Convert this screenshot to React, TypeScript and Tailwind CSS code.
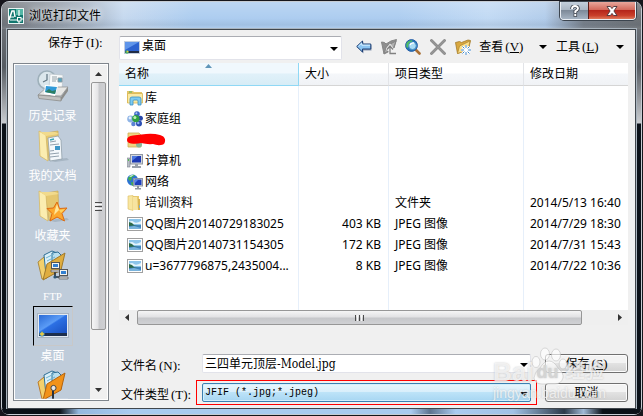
import type { ReactNode } from "react";

const uiFont = "font-['Noto_Sans','Noto_Sans_CJK_SC',sans-serif]";
const monoFont = "font-['Liberation_Mono','Noto_Sans_CJK_SC',monospace]";
const serifFont = "font-['Liberation_Serif','Noto_Sans_CJK_SC',serif]";

function Caret({ className = "" }: { className?: string }) {
  return (
    <svg className={className} width="8" height="4" viewBox="0 0 8 4" aria-hidden="true">
      <path d="M0 0h8L4 4z" fill="#000" />
    </svg>
  );
}

function Key({ children }: { children: ReactNode }) {
  return <span className={`${serifFont} pl-[2px] text-[13px]`}>{children}</span>;
}

/* ---------- small icons (16px) ---------- */

function DesktopSmall() {
  return (
    <svg width="16" height="14" viewBox="0 0 16 14" aria-hidden="true">
      <rect width="16" height="13" fill="#c3cede" />
      <rect x="1" y="1" width="14" height="10" fill="#2c62cf" />
      <path d="M1 1h14L1 9z" fill="#5f95ea" />
      <rect x="1" y="10" width="14" height="2" fill="#1f2c45" />
      <circle cx="3" cy="11" r="1.8" fill="#4fb36a" />
      <circle cx="3.6" cy="10.6" r=".8" fill="#f0c040" />
    </svg>
  );
}

function LibraryIcon() {
  return (
    <svg width="16" height="16" viewBox="0 0 16 16" aria-hidden="true">
      <path d="M0 1h6l1 1h8v11H0z" fill="#e3c468" />
      <path d="M.5 3.500h15v9.500H.5z" fill="#fae9a4" stroke="#d8b550" strokeWidth=".8" />
      <rect x="2" y="1.500" width="3" height="1" fill="#58b45c" />
      <path d="M3 15V9q0-2 2-2h7q2 0 2 2v6h-3v-4q0-1-1-1H7q-1 0-1 1v4z" fill="#7dcbf0" stroke="#3a8fc4" strokeWidth=".8" />
    </svg>
  );
}

function HomegroupIcon() {
  return (
    <svg width="16" height="16" viewBox="0 0 16 16" aria-hidden="true">
      <circle cx="3.6" cy="8" r="3.4" fill="#8fb4e6" />
      <circle cx="3" cy="7" r="1.4" fill="#e4f0fc" />
      <circle cx="10" cy="3" r="2.8" fill="#3a63c4" />
      <circle cx="9.400" cy="2.300" r="1" fill="#a9c4f2" />
      <circle cx="13.4" cy="7.2" r="2.5" fill="#2746a8" />
      <circle cx="12" cy="12.6" r="3" fill="#2d50b4" />
      <circle cx="11.300" cy="12" r="1.200" fill="#8fb0ee" />
      <circle cx="6.4" cy="13" r="2.2" fill="#5b83d4" />
      <circle cx="8.8" cy="7.6" r="3.7" fill="#2fa043" />
      <circle cx="7.9" cy="6.4" r="1.5" fill="#bdf0b4" />
    </svg>
  );
}

function UserFolderIcon() {
  return (
    <svg className="overflow-visible" width="16" height="16" viewBox="0 0 16 16" aria-hidden="true">
      <path d="M1 1h11l2 2v12H1z" fill="#f0d583" stroke="#cfae55" strokeWidth=".8" />
      <circle cx="12" cy="12.5" r="3" fill="#86b99c" />
      <path d="M0 8q0-4 6-4.600 6-.4 13-1.400 8-.6 14 1 4 1 5 4.200 1 5-4 5.800-4 .6-8-1-6 .5-12-1-4 1-10 .4-4-.4-4-3.400z" fill="#f00" />
    </svg>
  );
}

function ComputerIcon() {
  return (
    <svg width="16" height="16" viewBox="0 0 16 16" aria-hidden="true">
      <path d="M0 5h3v9H0z" fill="#b9bec6" stroke="#7c8490" strokeWidth=".6" />
      <rect x="1" y="6" width="1" height="2" fill="#4fc04f" />
      <rect x="3.500" y="1.500" width="12" height="9.500" fill="#d4d8de" stroke="#8f97a2" />
      <rect x="5" y="3" width="9" height="6.500" fill="#1c39b4" />
      <path d="M5 3h6L5 8z" fill="#4b78e0" />
      <path d="M8 11h3v2h3v2H5v-2h3z" fill="#9aa1ab" />
    </svg>
  );
}

function NetworkIcon() {
  return (
    <svg width="16" height="16" viewBox="0 0 16 16" aria-hidden="true">
      <circle cx="5.500" cy="6" r="5.500" fill="#2c73d2" />
      <path d="M1 4q3-4 7-3-1 2-3 2 0 3-2 4-2-1-2-3zM4 8l4 1-2 3q-2-1-2-4z" fill="#43b04b" />
      <path d="M2 2.500q2-2 5-1.800L4 3z" fill="#c9ecd9" />
      <rect x="6.500" y="4.500" width="9" height="7.500" fill="#d6dbe2" stroke="#8c95a1" />
      <rect x="7.500" y="5.500" width="7" height="5.500" fill="#1d3fbd" />
      <path d="M7.500 5.500h4l-4 4z" fill="#5583e8" />
      <path d="M10 12h2v2h2v1.500H8V14h2z" fill="#8d95a0" />
    </svg>
  );
}

function FolderIcon() {
  return (
    <svg width="16" height="16" viewBox="0 0 16 16" aria-hidden="true">
      <path d="M6 1h6v3l1 1v10H6z" fill="#e7c96e" />
      <path d="M1 1l5-.5v15L1 14z" fill="#f8e6a0" stroke="#dbbd62" strokeWidth=".6" />
      <path d="M6 2h4l1 13H6z" fill="#f7e4a0" />
      <path d="M11 4h2v11h-2z" fill="#d9b452" />
      <rect x="12" y="10" width="1" height="3" fill="#7fb0d8" />
    </svg>
  );
}

function ImageIcon() {
  return (
    <svg width="16" height="14" viewBox="0 0 16 14" aria-hidden="true">
      <rect x=".5" y=".5" width="15" height="13" fill="#fff" stroke="#a0a0a0" />
      <rect x="2" y="2" width="12" height="10" fill="#8cc4ea" />
      <path d="M2 5q3-2 5 0t7-1v3H2z" fill="#e3f3fc" />
      <path d="M2 5l3 1 2 2 7 1v1H2z" fill="#2e6b4a" />
      <path d="M2 9l12-1v4H2z" fill="#3f83bd" />
      <path d="M2 10l5-1 7 2v1H2z" fill="#79b3dc" />
    </svg>
  );
}

/* ---------- toolbar icons ---------- */

function BackIcon() {
  return (
    <svg width="16" height="16" viewBox="0 0 16 16" aria-hidden="true">
      <path d="M7.500 14.500L1 8l6.500-5.500V6H15.500v5.500h-8z" fill="#2b4a78" opacity=".5" />
      <path d="M6.500 2L.7 7.500 6.500 13v-3h8.300V5H6.500z" fill="#8cc5f2" stroke="#1d3f74" />
      <path d="M2.500 7.200L5.800 4v2.200h8.300" fill="none" stroke="#d6efff" />
    </svg>
  );
}

function UpFolderIcon() {
  return (
    <svg width="16" height="16" viewBox="0 0 16 16" aria-hidden="true">
      <path d="M.5 3l3 .5L5 5l5-3 5.500-1.500L13 9l-4 3-6 3z" fill="#8f8f8f" stroke="#858585" />
      <path d="M3 14.500L5.500 7l9.500-5-2.500 7z" fill="#b0b0b0" stroke="#858585" />
      <path d="M6 11l3-4 3 4M9 8v6.500h6" fill="none" stroke="#f2f2f2" strokeWidth="3" />
      <path d="M6 10.500L9 7l3 3.500M9 8v6.500h6" fill="none" stroke="#808080" strokeWidth="1.300" />
    </svg>
  );
}

function SearchWebIcon() {
  return (
    <svg width="16" height="16" viewBox="0 0 16 16" aria-hidden="true">
      <path d="M10 10l4.500 4.500" stroke="#a96f35" strokeWidth="2.600" strokeLinecap="round" />
      <circle cx="6.500" cy="6.500" r="5.900" fill="#2374b8" stroke="#285fa8" />
      <path d="M1.500 4q2-3 6-2.800Q7 4 4 5q0 3-2 4-1.400-2-.5-5z" fill="#4fbd63" />
      <circle cx="7.500" cy="6.800" r="3.800" fill="#a9dcf5" stroke="#4c92c6" />
      <path d="M5 6q1-2.500 4-2" stroke="#fff" fill="none" strokeWidth="1.400" />
    </svg>
  );
}

function DeleteIcon() {
  return (
    <svg width="16" height="16" viewBox="0 0 16 16" aria-hidden="true">
      <path d="M1.500 1.500l13 13M14.500 1.500l-13 13" stroke="#858585" strokeWidth="2.800" strokeLinecap="round" />
      <path d="M1.500 1.500l13 13M14.500 1.500l-13 13" stroke="#989898" strokeWidth="1.400" strokeLinecap="round" />
    </svg>
  );
}

function NewFolderIcon() {
  return (
    <svg width="16" height="16" viewBox="0 0 16 16" aria-hidden="true">
      <path d="M.5 3.500l4-1 2 1L13 1l2.500.500-2 9-11 4z" fill="#d9a83f" stroke="#a27a2a" strokeWidth=".8" />
      <path d="M2.500 14.500L4.500 7l10.500-5-2 9z" fill="#fbe08a" stroke="#b48a34" strokeWidth=".8" />
      <path d="M11 6v10M6 11h10M7.500 7.500l7 7M14.500 7.500l-7 7" stroke="#fff" strokeWidth="2.400" />
      <path d="M11 6v10M6 11h10M7.500 7.500l7 7M14.500 7.500l-7 7" stroke="#3f86c9" strokeWidth="1" />
      <circle cx="11" cy="11" r="2.200" fill="#fff" />
    </svg>
  );
}

/* ---------- places bar icons (32px) ---------- */

function HistoryPlace() {
  return (
    <svg width="32" height="32" viewBox="0 0 32 32" aria-hidden="true">
      <circle cx="10" cy="10" r="9" fill="#dbe7ec" stroke="#9eb0ba" strokeWidth="1.600" />
      <path d="M10 4v6l-4 2" stroke="#5f7480" fill="none" strokeWidth="1.200" />
      <path d="M13 4l13 1-1 15-13-2z" fill="#f7f9fa" stroke="#b8c1c8" strokeWidth=".7" />
      <path d="M15 7h5M15 9h5M15 11h4M21 8h4v4h-4z" stroke="#8b979f" strokeWidth=".9" fill="#55a5c0" />
      <path d="M1 25l9-8h21l-7 9z" fill="#e7e7e5" stroke="#8e8e8c" strokeWidth=".7" />
      <path d="M1 25l23 2v4L2 28.500z" fill="#c2c2c0" stroke="#858583" strokeWidth=".7" />
      <path d="M24 27l7-10v4l-7 10z" fill="#8d8d8b" />
      <path d="M8 15l13 1-3 10-11-2z" fill="#fff" />
      <path d="M9 16l11 1-2 7-10-2z" fill="#319ad8" />
      <path d="M8 22l4-3 3 2 4-1-1 4z" fill="#2e7f62" />
    </svg>
  );
}

function FolderBase() {
  return (
    <>
      <path d="M10 30l20-2 2 2-14 2z" fill="#8f9fae" opacity=".5" />
      <path d="M8 3l13-2 1 26-10 3z" fill="#e5c76f" stroke="#c6a64f" strokeWidth=".6" />
      <path d="M2 1l7 4 2 26-8-5z" fill="#fbedb0" stroke="#d6b964" strokeWidth=".8" />
      <path d="M3 2h15l4 2-13 2z" fill="#f1da8c" />
    </>
  );
}

function DocumentsPlace() {
  return (
    <svg width="32" height="32" viewBox="0 0 32 32" aria-hidden="true">
      <FolderBase />
      <path d="M11 8l10-2 3 4 1 19-12 2z" fill="#f4f8fb" stroke="#909faa" strokeWidth=".8" />
      <path d="M13 12l6-1M13 15l9-1M13 24l9-1M13 27l9-1M13 21l4-.5" stroke="#8796a4" strokeWidth=".9" />
      <rect x="18" y="16" width="5" height="4" fill="#3e97c8" />
      <path d="M13 10l4-1" stroke="#38a7b4" strokeWidth="1.500" />
    </svg>
  );
}

function FavoritesPlace() {
  return (
    <svg width="32" height="32" viewBox="0 0 32 32" aria-hidden="true">
      <FolderBase />
      <path d="M20 12l2.500 6.500 7.500-.5-5 5.500 2.500 7.500-7.500-4-7 4 2-7.500-5-5 6.500-.5z" fill="#fca82e" stroke="#dd6b12" />
      <path d="M20 14l2 6-5 5 1-5z" fill="#ffe69a" />
      <path d="M22 20l6-1-4 4z" fill="#ffd25c" />
    </svg>
  );
}

function OpenFolder({ front, edge }: { front: string; edge: string }) {
  return (
    <>
      <path d="M1 12l6-5 3 4v17l-5 1z" fill="#f3d06b" stroke={edge} strokeWidth=".8" />
      <path d="M7 5l8-4 5 2v17L9 25z" fill="#d9eff8" stroke="#2f6f96" />
      <path d="M15 3l6-1 3 3v14l-9 4z" fill="#b9dfee" stroke="#2f6f96" />
      <path d="M9 8l8-4M10 11l8-4" stroke="#6fb2cf" />
      <path d="M10 14L28 3l-4 17L6 30z" fill={front} stroke={edge} />
    </>
  );
}

function MiniPc({ x, y }: { x: number; y: number }) {
  return (
    <g transform={`translate(${x} ${y})`}>
      <rect x=".5" y=".5" width="8" height="6" fill="#f4f4f0" stroke="#555" />
      <rect x="2" y="2" width="5" height="3" fill="#3480d0" />
      <path d="M0 8h9v2H0z" fill="#ddd" stroke="#555" strokeWidth=".7" />
    </g>
  );
}

function FtpPlace() {
  return (
    <svg width="32" height="32" viewBox="0 0 32 32" aria-hidden="true">
      <OpenFolder front="#dfad3f" edge="#a17a2a" />
      <path d="M18 22v5h5" stroke="#25303a" strokeWidth="1.600" fill="none" />
      <MiniPc x={14} y={12} />
      <MiniPc x={22} y={19} />
      <circle cx="18" cy="27" r="1.600" fill="#2a5575" />
    </svg>
  );
}

function DesktopPlace() {
  return (
    <svg width="32" height="26" viewBox="0 0 32 26" aria-hidden="true">
      <defs>
        <linearGradient id="screen" x1="0" y1="0" x2="1" y2="1">
          <stop offset="0" stopColor="#2a6ad6" />
          <stop offset=".45" stopColor="#5b9cf6" />
          <stop offset=".5" stopColor="#2c70e4" />
          <stop offset="1" stopColor="#1a50bf" />
        </linearGradient>
      </defs>
      <rect x=".5" y=".5" width="31" height="24" fill="#e3eaf2" stroke="#a8b4c2" />
      <rect x="2" y="2" width="28" height="18" fill="url(#screen)" />
      <rect x="2" y="20" width="28" height="3" fill="#1d2f4d" />
      <circle cx="5" cy="21" r="2.600" fill="#2e7dbd" />
      <path d="M5 18.800v4.400M2.800 21h4.400" stroke="#f3cf3e" strokeWidth="1.300" />
    </svg>
  );
}

function BuzzsawPlace() {
  return (
    <svg width="32" height="32" viewBox="0 0 32 32" aria-hidden="true">
      <OpenFolder front="#f29219" edge="#b5640d" />
      <path d="M16 20v11" stroke="#28323c" strokeWidth="2" />
      <circle cx="16.500" cy="18" r="2.600" fill="#e6e6e6" stroke="#444" />
      <path d="M1 29.500h30" stroke="#e6ebf0" strokeWidth="1.500" />
    </svg>
  );
}

function AppIcon() {
  return (
    <svg width="16" height="16" viewBox="0 0 16 16" aria-hidden="true">
      <rect x=".5" y=".5" width="15" height="15" fill="#11776f" stroke="#e8f4f2" />
      <path d="M8 1h7v6H8z" fill="#54b7a6" />
      <path d="M1 12l3-9h2l1 6" stroke="#fff" fill="none" strokeWidth="1.500" />
      <path d="M1 9h5M11 2v6M13 11h3M11 13v2M2 12h7" stroke="#fff" strokeWidth="1.200" />
      <rect x="9.500" y="9.500" width="3.500" height="3.500" fill="#11776f" stroke="#fff" />
    </svg>
  );
}

/* ---------- data ---------- */

const places = [
  { label: "历史记录", icon: <HistoryPlace /> },
  { label: "我的文档", icon: <DocumentsPlace /> },
  { label: "收藏夹", icon: <FavoritesPlace /> },
  { label: "FTP", icon: <FtpPlace />, latin: true },
  { label: "桌面", icon: <DesktopPlace />, selected: true },
  { label: "", icon: <BuzzsawPlace /> },
];

const files = [
  { name: "库", icon: <LibraryIcon />, size: "", type: "", date: "" },
  { name: "家庭组", icon: <HomegroupIcon />, size: "", type: "", date: "" },
  { name: "", icon: <UserFolderIcon />, size: "", type: "", date: "" },
  { name: "计算机", icon: <ComputerIcon />, size: "", type: "", date: "" },
  { name: "网络", icon: <NetworkIcon />, size: "", type: "", date: "" },
  { name: "培训资料", icon: <FolderIcon />, size: "", type: "文件夹", date: "2014/5/13 16:40" },
  { name: "QQ图片20140729183025", icon: <ImageIcon />, size: "403 KB", type: "JPEG 图像", date: "2014/7/29 18:30" },
  { name: "QQ图片20140731154305", icon: <ImageIcon />, size: "172 KB", type: "JPEG 图像", date: "2014/7/31 15:43" },
  { name: "u=3677796875,2435004...", icon: <ImageIcon />, size: "8 KB", type: "JPEG 图像", date: "2014/7/22 10:36" },
];

/* ---------- sections ---------- */

function TitleBar() {
  return (
    <header className="flex h-[27px] shrink-0 items-start rounded-t-md bg-[linear-gradient(180deg,#ffffff30_0,#ffffff00_60%,#2b405818_85%,#ffffff10),linear-gradient(90deg,#73777c_0,#8f98a3_8%,#a5b2c2_13%,#c6d9ef_19%,#adcdf0_30%,#adcdf0_62%,#c2daf4_76%,#b3cdeb_85%,#7a828c_91%,#6f7377)] pl-[6px] pr-[5px]">
      <div className="mt-[6px] flex flex-1 items-center gap-[5px]">
        <AppIcon />
        <h1 className="text-xs leading-4 [text-shadow:0_0_6px_#fff,0_0_8px_#ffffffb0]">浏览打印文件</h1>
      </div>
      <div className="flex h-[18px] overflow-hidden rounded-b-[4px] border border-t-0 border-[#e9eef4] shadow-[0_0_0_1px_#3c454f]">
        <button
          type="button"
          aria-label="帮助"
          className="flex w-[27px] items-center justify-center bg-[linear-gradient(180deg,#c3cfdc_0,#a9b5c3_48%,#7d8a99_50%,#a5b3c2)]"
        >
          <svg width="10" height="12" viewBox="0 0 10 12" aria-hidden="true">
            <path d="M2 4q0-3 3-3t3 2.600Q8 5 5.300 6.300V8" fill="none" stroke="#404650" strokeWidth="3.600" />
            <path d="M2 4q0-3 3-3t3 2.600Q8 5 5.300 6.300V8" fill="none" stroke="#fff" strokeWidth="1.900" />
            <rect x="3.900" y="8.600" width="2.800" height="2.800" fill="#fff" stroke="#404650" strokeWidth=".8" />
          </svg>
        </button>
        <button
          type="button"
          aria-label="关闭"
          className="flex w-[47px] items-center justify-center border-l border-[#5d1d18] bg-[linear-gradient(180deg,#e8a79c_0,#d2685a_46%,#b5261b_50%,#c9402b_80%,#df7a5c)]"
        >
          <svg width="12" height="10" viewBox="0 0 12 10" aria-hidden="true">
            <path d="M1 .5h3.400L6 2.600 7.600.5H11L7.900 5l3.100 4.500H7.600L6 7.400 4.400 9.500H1L4.100 5z" fill="#fff" stroke="#4a3338" strokeWidth=".9" />
          </svg>
        </button>
      </div>
    </header>
  );
}

function Toolbar() {
  const tool = "flex size-4 items-center justify-center";
  return (
    <div className="flex h-6 shrink-0 items-center">
      <label htmlFor="folder" className="w-[106px] shrink-0 pb-[10px] pl-[35px] text-xs leading-3">
        保存于<Key>(I):</Key>
      </label>
      <div className="relative h-6 w-[223px] shrink-0">
        <select
          id="folder"
          className="h-full w-full appearance-none rounded-[2px] border border-[#e2e3ea] border-t-[#abadb3] bg-white pb-1 pl-[22px] text-xs leading-4 outline-none"
        >
          <option>桌面</option>
        </select>
        <span className="pointer-events-none absolute left-[5px] top-[5px]">
          <DesktopSmall />
        </span>
        <Caret className="pointer-events-none absolute right-1 top-[11px]" />
      </div>
      <div className="ml-[14px] flex flex-1 items-center justify-between pb-[3px] pr-1">
        <button type="button" aria-label="后退" className={tool}><BackIcon /></button>
        <button type="button" aria-label="上一级" className={tool}><UpFolderIcon /></button>
        <button type="button" aria-label="搜索 Web" className={tool}><SearchWebIcon /></button>
        <button type="button" aria-label="删除" className={tool}><DeleteIcon /></button>
        <button type="button" aria-label="创建新文件夹" className={tool}><NewFolderIcon /></button>
        <button type="button" className="flex w-[68px] items-center justify-between text-xs leading-4">
          <span>查看<Key>(<u>V</u>)</Key></span>
          <Caret />
        </button>
        <button type="button" className="flex w-[68px] items-center justify-between text-xs leading-4">
          <span>工具<Key>(<u>L</u>)</Key></span>
          <Caret />
        </button>
      </div>
    </div>
  );
}

function PlacesBar() {
  return (
    <nav className="mb-1 mr-[10px] flex w-24 shrink-0 overflow-hidden border border-[#7f858c] bg-white p-px">
      <ul className="min-w-0 flex-1 overflow-hidden bg-[#bfccda] pt-px">
        {places.map((p, i) => (
          <li key={i} className="h-[60px]">
            <button type="button" aria-label={p.label || "Buzzsaw"} className="flex w-full flex-col items-center text-white">
              <span
                className={
                  p.selected
                    ? "flex size-10 items-center justify-center border border-[#c8c8c8] border-l-black border-t-black"
                    : "flex size-10 items-center justify-center"
                }
              >
                {p.icon}
              </span>
              <span className={p.latin ? `${serifFont} text-[11px] leading-5` : "text-xs leading-5"}>{p.label}</span>
            </button>
          </li>
        ))}
      </ul>
      <div className="flex w-[17px] shrink-0 flex-col items-center bg-[#f0f0f0]" aria-hidden="true">
        <svg width="17" height="17" viewBox="0 0 17 17"><path d="M5 11h7L8.500 7z" fill="#333" /></svg>
        <div className="flex h-[248px] w-[15px] flex-col items-center justify-center gap-px rounded-[2px] border border-[#979797] bg-[linear-gradient(90deg,#f6f6f6,#e4e4e6_45%,#c9cacd_55%,#cfd0d3)]">
          <span className="h-px w-[7px] bg-[#4a4a4a]" />
          <span className="h-px w-[7px] bg-[#f8f8f8]" />
          <span className="h-px w-[7px] bg-[#4a4a4a]" />
          <span className="h-px w-[7px] bg-[#f8f8f8]" />
          <span className="h-px w-[7px] bg-[#4a4a4a]" />
        </div>
        <svg className="mt-auto" width="17" height="17" viewBox="0 0 17 17"><path d="M5 6h7l-3.500 4z" fill="#333" /></svg>
      </div>
    </nav>
  );
}

function FileTable() {
  const head = "border-b border-r border-[#d5d5d5] border-r-[#e2e4e8] bg-[linear-gradient(180deg,#fff_45%,#f5f7fa_50%,#f0f2f5)] pl-[6px] text-left font-normal";
  const cell = "border-r border-[#e6effa]";
  return (
    <div className="min-h-0 flex-1 overflow-hidden bg-white">
      <table className="h-full w-full table-fixed border-separate border-spacing-0 whitespace-nowrap text-xs leading-4">
        <colgroup>
          <col className="w-[180px]" />
          <col className="w-[90px]" />
          <col className="w-[135px]" />
          <col />
        </colgroup>
        <thead>
          <tr className="h-[23px]">
            <th className="relative border-b border-r border-[#8fd8f5] bg-[linear-gradient(180deg,#f0f8fd_45%,#e0f1f9_50%,#d7ecf6)] pl-[6px] text-left font-normal" aria-sort="ascending">
              名称
              <svg className="absolute left-[86px] top-px" width="7" height="4" viewBox="0 0 7 4" aria-hidden="true">
                <path d="M0 4h7L3.500 0z" fill="#5f95b8" />
              </svg>
            </th>
            <th className={head}>大小</th>
            <th className={head}>项目类型</th>
            <th className="border-b border-[#d5d5d5] bg-[linear-gradient(180deg,#fff_45%,#f5f7fa_50%,#f0f2f5)] pl-[6px] text-left font-normal">修改日期</th>
          </tr>
        </thead>
        <tbody>
          <tr className="h-px"><td className={cell} /><td className={cell} /><td className={cell} /><td /></tr>
          {files.map((f, i) => (
            <tr key={i} className="h-[21px]">
              <td className={`${cell} pl-2`}>
                <span className="flex items-center gap-[2px]">
                  <span className="flex size-4 shrink-0 items-center">{f.icon}</span>
                  {f.name}
                </span>
              </td>
              <td className={`${cell} pr-[7px] text-right`}>{f.size}</td>
              <td className={`${cell} pl-[6px]`}>{f.type}</td>
              <td className="pl-[6px]">{f.date}</td>
            </tr>
          ))}
          <tr><td className={cell} /><td className={cell} /><td className={cell} /><td /></tr>
        </tbody>
      </table>
    </div>
  );
}

function HorizontalScroll() {
  return (
    <div className="flex h-[15px] shrink-0 bg-[#efefef]" aria-hidden="true">
      <svg width="18" height="15" viewBox="0 0 18 15"><path d="M10 4v7L6 7.500z" fill="#333" /></svg>
      <div className="flex flex-1 items-center justify-center gap-px rounded-[2px] border border-[#979797] bg-[linear-gradient(180deg,#f5f5f5,#e2e2e4_45%,#c6c7ca_55%,#d0d1d4)]">
        <span className="h-[6px] w-px bg-[#4a4a4a]" />
        <span className="h-[6px] w-px bg-[#f8f8f8]" />
        <span className="h-[6px] w-px bg-[#4a4a4a]" />
        <span className="h-[6px] w-px bg-[#f8f8f8]" />
        <span className="h-[6px] w-px bg-[#4a4a4a]" />
      </div>
      <div className="w-7" />
      <svg width="18" height="15" viewBox="0 0 18 15"><path d="M8 4v7l4-3.500z" fill="#333" /></svg>
    </div>
  );
}

function SaveForm() {
  const button =
    "ml-2 h-[19px] w-[83px] shrink-0 rounded-[3px] border border-[#707070] bg-[linear-gradient(180deg,#f3f3f3_45%,#e2e2e2_50%,#d2d2d2)] text-xs leading-4 shadow-[inset_0_0_0_1px_#fcfcfc]";
  const label = "w-[77px] shrink-0 pl-[2px] pt-1 text-xs leading-4";
  return (
    <form className="mt-[29px] flex shrink-0 flex-col gap-[7px]" onSubmit={(e) => e.preventDefault()}>
      <div className="flex h-[19px] items-center">
        <label htmlFor="filename" className={label}>
          文件名<Key>(N):</Key>
        </label>
        <div className="relative flex-1 px-[6px]">
          <input
            id="filename"
            defaultValue="三四单元顶层-Model.jpg"
            className="block h-[19px] w-full rounded-[2px] border border-[#e2e3ea] border-t-[#abadb3] bg-white pb-[2px] pl-[2px] font-['DejaVu_Serif_Condensed','DejaVu_Serif','Noto_Sans_CJK_SC',serif] text-xs leading-4 outline-none"
          />
          <Caret className="pointer-events-none absolute right-[9px] top-[9px]" />
        </div>
        <button type="submit" className={button}>
          保存<Key>(<u>S</u>)</Key>
        </button>
      </div>
      <div className="flex h-[25px] items-center">
        <label htmlFor="filetype" className={label}>
          文件类型<Key>(T):</Key>
        </label>
        <div className="relative flex-1 border border-[#f00] px-[5px] py-[2px]">
          <select
            id="filetype"
            className={`${monoFont} block h-[19px] w-full appearance-none rounded-[2px] border border-[#3c7fb1] bg-[linear-gradient(180deg,#e8f5fc_0,#d8eefb_48%,#bde3f8_50%,#a7d6f2)] pl-[2px] text-[10px] leading-4 shadow-[inset_0_0_0_1px_#d3effc] outline-none`}
          >
            <option>JFIF (*.jpg;*.jpeg)</option>
          </select>
          <Caret className="pointer-events-none absolute right-2 top-[11px]" />
        </div>
        <button type="button" className={button}>取消</button>
      </div>
    </form>
  );
}

function Watermark() {
  return (
    <div
      className="pointer-events-none absolute bottom-[13px] right-[32px] h-[54px] w-[116px] font-['Liberation_Sans','Noto_Sans_CJK_SC',sans-serif] text-white/70 [text-shadow:0_0_2px_#9a9a9a90]"
      aria-hidden="true"
    >
      <svg className="absolute left-9 top-0" width="40" height="38" viewBox="0 0 40 38">
        <g fill="#fff" fillOpacity=".65" stroke="#b8b8b8" strokeOpacity=".5">
          <ellipse cx="7" cy="15" rx="4" ry="5.500" />
          <ellipse cx="16" cy="7" rx="4.500" ry="6" />
          <ellipse cx="27" cy="8" rx="4.500" ry="6" />
          <ellipse cx="34" cy="17" rx="3.800" ry="5" />
          <path d="M20 14q5 0 9 7 6 5 5 10-2 6-8 6H13q-7 0-8-6 0-5 6-10 4-7 9-7z" />
        </g>
      </svg>
      <div className="absolute inset-x-0 top-[11px] flex items-center text-[26px] font-bold leading-[28px]">
        <span>Bai</span>
        <span className="w-7 text-center text-[18px] text-[#d4d4d4]">du</span>
        <span className="pl-1 text-[19px]">经验</span>
      </div>
      <div className="absolute bottom-0 left-0 text-[14px] leading-4">jingyan.baidu.com</div>
    </div>
  );
}

export default function App() {
  return (
    <div className={`${uiFont} h-screen bg-[#16161c] p-px text-xs text-black`}>
      <div className="relative flex h-full flex-col rounded-lg border border-[#c6ccd3] bg-[linear-gradient(180deg,#7b7f85_0,#565b61_65px,#c9ccd0_121px,#0b1118_122px)]">
        <TitleBar />
        <main className="mx-[5px] flex min-h-0 flex-1 flex-col border border-[#40464c] bg-[#f0f0f0] pb-[3px] pl-[5px] pr-[7px] pt-[6px] shadow-[0_0_0_1px_#a9b4be]">
          <Toolbar />
          <div className="mt-[3px] flex min-h-0 flex-1">
            <PlacesBar />
            <div className="flex min-w-0 flex-1 flex-col">
              <FileTable />
              <HorizontalScroll />
              <SaveForm />
            </div>
          </div>
        </main>
        <div className="h-[5px] shrink-0 rounded-b-md bg-[linear-gradient(90deg,#0b1118_9%,#93b8df_12%,#a9cbf0_20%,#a9cbf0_64%,#5c748f_67%,#a9cbf0_71%,#a0c2e6_80%,#2c3a4a_88%,#9fb9d6_91%,#0b1118_94%)]" />
        <Watermark />
      </div>
    </div>
  );
}
